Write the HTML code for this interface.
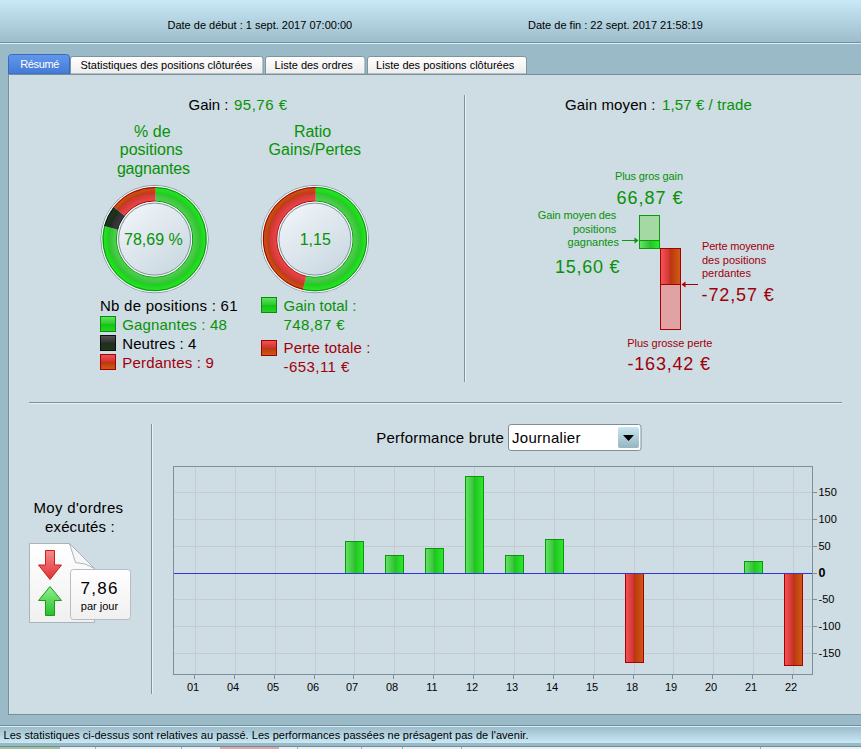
<!DOCTYPE html>
<html><head><meta charset="utf-8">
<style>
html,body{margin:0;padding:0;width:861px;height:749px;overflow:hidden;background:#9bbac8;}
svg{position:absolute;left:0;top:0;}
text{font-family:"Liberation Sans",sans-serif;white-space:pre;}
</style></head>
<body>
<svg xml:space="preserve" width="861" height="749" viewBox="0 0 861 749">
<defs>
  <linearGradient id="hdr" x1="0" y1="0" x2="0" y2="1">
    <stop offset="0" stop-color="#c9e9f6"/><stop offset="1" stop-color="#9ebdcb"/>
  </linearGradient>
  <linearGradient id="stat" x1="0" y1="0" x2="0" y2="1">
    <stop offset="0" stop-color="#9dbccb"/><stop offset="1" stop-color="#c9e9f6"/>
  </linearGradient>
  <linearGradient id="tabsel" x1="0" y1="0" x2="0" y2="1">
    <stop offset="0" stop-color="#6298ea"/><stop offset="1" stop-color="#4479d6"/>
  </linearGradient>
  <linearGradient id="tab" x1="0" y1="0" x2="0" y2="1">
    <stop offset="0" stop-color="#ffffff"/><stop offset="1" stop-color="#ececec"/>
  </linearGradient>
  <linearGradient id="barG" x1="0" y1="0" x2="1" y2="0">
    <stop offset="0" stop-color="#60e860"/><stop offset="0.5" stop-color="#36bf36"/>
    <stop offset="0.5" stop-color="#1ec41e"/><stop offset="1" stop-color="#30ea30"/>
  </linearGradient>
  <linearGradient id="barR" x1="0" y1="0" x2="1" y2="0">
    <stop offset="0" stop-color="#f25656"/><stop offset="0.5" stop-color="#cf2e2e"/>
    <stop offset="0.5" stop-color="#b8380e"/><stop offset="1" stop-color="#d25a16"/>
  </linearGradient>
  <linearGradient id="legG" x1="0" y1="0" x2="0" y2="1">
    <stop offset="0" stop-color="#5ee85e"/><stop offset="0.5" stop-color="#2cc82c"/>
    <stop offset="0.5" stop-color="#18c018"/><stop offset="1" stop-color="#20d820"/>
  </linearGradient>
  <linearGradient id="legK" x1="0" y1="0" x2="0" y2="1">
    <stop offset="0" stop-color="#555"/><stop offset="0.5" stop-color="#2e2e2e"/>
    <stop offset="0.5" stop-color="#1e2e1e"/><stop offset="1" stop-color="#1a3a1a"/>
  </linearGradient>
  <linearGradient id="legR" x1="0" y1="0" x2="0" y2="1">
    <stop offset="0" stop-color="#f25656"/><stop offset="0.5" stop-color="#d03030"/>
    <stop offset="0.5" stop-color="#b8380e"/><stop offset="1" stop-color="#d25a16"/>
  </linearGradient>
  <linearGradient id="inner" x1="0" y1="0" x2="1" y2="1">
    <stop offset="0" stop-color="#eef3f6"/><stop offset="1" stop-color="#cbd9e1"/>
  </linearGradient>
  <linearGradient id="combo" x1="0" y1="0" x2="0" y2="1">
    <stop offset="0" stop-color="#c8e6f2"/><stop offset="1" stop-color="#97b4c1"/>
  </linearGradient>
  <linearGradient id="doc" x1="0" y1="0" x2="0" y2="1">
    <stop offset="0" stop-color="#ffffff"/><stop offset="1" stop-color="#f0f0f0"/>
  </linearGradient>
</defs>

<!-- header -->
<rect x="0" y="0" width="861" height="42" fill="url(#hdr)"/>
<rect x="0" y="42" width="861" height="1" fill="#718e9a"/>
<rect x="0" y="43" width="861" height="1" fill="#d9eef7"/>
<text x="167.5" y="29" font-size="11" fill="#000">Date de début : 1 sept. 2017 07:00:00</text>
<text x="528" y="29" font-size="11" fill="#000">Date de fin : 22 sept. 2017 21:58:19</text>

<!-- tabs -->
<path d="M8.5 74 V57.5 Q8.5 54.5 11.5 54.5 H66.5 Q69.5 54.5 69.5 57.5 V74 Z" fill="url(#tabsel)" stroke="#3a69c0" stroke-width="1"/>
<text x="20.3" y="68.3" font-size="11" fill="#fff" textLength="39" lengthAdjust="spacing">Résumé</text>
<path d="M70.5 74 V59 Q70.5 56.5 73 56.5 H260.5 Q263 56.5 263 59 V74 Z" fill="url(#tab)" stroke="#7f939c" stroke-width="1"/>
<text x="80.4" y="68.8" font-size="11" fill="#000">Statistiques des positions clôturées</text>
<path d="M265.5 74 V59 Q265.5 56.5 268 56.5 H362.5 Q365 56.5 365 59 V74 Z" fill="url(#tab)" stroke="#7f939c" stroke-width="1"/>
<text x="274.6" y="68.8" font-size="11" fill="#000">Liste des ordres</text>
<path d="M367.5 74 V59 Q367.5 56.5 370 56.5 H524 Q526.5 56.5 526.5 59 V74 Z" fill="url(#tab)" stroke="#7f939c" stroke-width="1"/>
<text x="376.1" y="68.8" font-size="11" fill="#000">Liste des positions clôturées</text>

<!-- main panel -->
<rect x="8" y="74" width="853" height="641" fill="#cedce3"/>
<rect x="8" y="74" width="853" height="1" fill="#76909b"/>
<rect x="70" y="74" width="0" height="1" fill="#76909b"/>
<rect x="8" y="74" width="1" height="641" fill="#76909b"/>
<rect x="9" y="75" width="1" height="639" fill="#d6e4ea"/>
<rect x="8" y="714" width="853" height="1" fill="#76909b"/>

<!-- status bar -->
<rect x="0" y="725" width="861" height="1" fill="#6f8c98"/>
<rect x="0" y="726" width="861" height="1" fill="#d9eef7"/>
<rect x="0" y="727" width="861" height="16" fill="url(#stat)"/>
<rect x="0" y="743" width="861" height="3" fill="#9bb8c5"/>
<rect x="0" y="746" width="861" height="1" fill="#6f8c98"/>
<rect x="0" y="747" width="861" height="2" fill="#e9eff4"/>
<rect x="0" y="747" width="60" height="2" fill="#9cc49c"/>
<rect x="220" y="747" width="59" height="2" fill="#e0a8a8"/>
<g fill="#a3adb4"><rect x="95" y="747" width="1" height="2"/><rect x="181" y="747" width="1" height="2"/><rect x="297" y="747" width="1" height="2"/><rect x="361" y="747" width="1" height="2"/><rect x="402" y="747" width="1" height="2"/><rect x="461" y="747" width="1" height="2"/><rect x="760" y="747" width="1" height="2"/></g>
<text x="3.5" y="739" font-size="11" fill="#000" textLength="525" lengthAdjust="spacing">Les statistiques ci-dessus sont relatives au passé. Les performances passées ne présagent pas de l'avenir.</text>

<!-- separators -->
<rect x="464" y="95" width="1" height="287" fill="#7a939e"/>
<rect x="465" y="95" width="1" height="287" fill="#e2f2fa"/>
<rect x="29" y="402" width="813" height="1" fill="#7a939e"/>
<rect x="29" y="403" width="813" height="1" fill="#e2f2fa"/>
<rect x="151" y="424" width="1" height="270" fill="#7a939e"/>
<rect x="152" y="424" width="1" height="270" fill="#e2f2fa"/>


<!-- ===== Donuts ===== -->
<defs>
  <radialGradient id="rgG1" gradientUnits="userSpaceOnUse" cx="154.6" cy="239.1" r="52.1">
    <stop offset="0.73" stop-color="#4ed24e"/><stop offset="0.87" stop-color="#36c136"/>
    <stop offset="0.87" stop-color="#1ccf1c"/><stop offset="1" stop-color="#2ae62a"/>
  </radialGradient>
  <radialGradient id="rgK1" gradientUnits="userSpaceOnUse" cx="154.6" cy="239.1" r="52.1">
    <stop offset="0.73" stop-color="#3c3c3c"/><stop offset="0.87" stop-color="#2c2c2c"/>
    <stop offset="0.87" stop-color="#1c2c1c"/><stop offset="1" stop-color="#1e381e"/>
  </radialGradient>
  <radialGradient id="rgR1" gradientUnits="userSpaceOnUse" cx="154.6" cy="239.1" r="52.1">
    <stop offset="0.73" stop-color="#e84848"/><stop offset="0.88" stop-color="#d03434"/>
    <stop offset="0.88" stop-color="#bc3c10"/><stop offset="1" stop-color="#cc5818"/>
  </radialGradient>
  <radialGradient id="rgG2" gradientUnits="userSpaceOnUse" cx="314.9" cy="239.1" r="52.1">
    <stop offset="0.73" stop-color="#4ed24e"/><stop offset="0.87" stop-color="#36c136"/>
    <stop offset="0.87" stop-color="#1ccf1c"/><stop offset="1" stop-color="#2ae62a"/>
  </radialGradient>
  <radialGradient id="rgR2" gradientUnits="userSpaceOnUse" cx="314.9" cy="239.1" r="52.1">
    <stop offset="0.73" stop-color="#e84848"/><stop offset="0.88" stop-color="#d03434"/>
    <stop offset="0.88" stop-color="#bc3c10"/><stop offset="1" stop-color="#cc5818"/>
  </radialGradient>
  <linearGradient id="innerC" x1="0.2" y1="0.1" x2="0.8" y2="0.9">
    <stop offset="0" stop-color="#edf2f6"/><stop offset="1" stop-color="#ccdae2"/>
  </linearGradient>
</defs>

<g id="donut1">
<circle cx="154.6" cy="239.1" r="53.70" fill="none" stroke="#84959e" stroke-width="1"/>
<circle cx="154.6" cy="239.1" r="52.60" fill="none" stroke="#f6f9fb" stroke-width="1.1"/>
<path d="M155.69 187.01 A52.10 52.10 0 1 1 104.15 226.07 L118.29 229.72 A37.50 37.50 0 1 0 155.39 201.61 Z" fill="url(#rgG1)"/>
<path d="M104.15 226.07 A52.10 52.10 0 0 1 113.59 206.96 L125.08 215.97 A37.50 37.50 0 0 0 118.29 229.72 Z" fill="url(#rgK1)"/>
<path d="M113.59 206.96 A52.10 52.10 0 0 1 155.69 187.01 L155.39 201.61 A37.50 37.50 0 0 0 125.08 215.97 Z" fill="url(#rgR1)"/>
<path d="M155.68 187.51 A51.60 51.60 0 1 1 104.64 226.20 M155.40 201.11 A38.00 38.00 0 1 1 117.81 229.60" fill="none" stroke="#0a960a" stroke-width="1"/>
<path d="M104.64 226.20 A51.60 51.60 0 0 1 113.99 207.27 M117.81 229.60 A38.00 38.00 0 0 1 124.69 215.66" fill="none" stroke="#0a140a" stroke-width="1"/>
<path d="M113.99 207.27 A51.60 51.60 0 0 1 155.68 187.51 M124.69 215.66 A38.00 38.00 0 0 1 155.40 201.11" fill="none" stroke="#a80000" stroke-width="1"/>
<circle cx="154.6" cy="239.1" r="37.00" fill="none" stroke="#f6f9fb" stroke-width="1.1"/>
<circle cx="154.6" cy="239.1" r="36.00" fill="url(#innerC)" stroke="#84959e" stroke-width="1"/>
</g>
<g id="donut2">
<circle cx="314.9" cy="239.1" r="53.70" fill="none" stroke="#84959e" stroke-width="1"/>
<circle cx="314.9" cy="239.1" r="52.60" fill="none" stroke="#f6f9fb" stroke-width="1.1"/>
<path d="M315.81 187.01 A52.10 52.10 0 1 1 302.92 289.80 L306.28 275.60 A37.50 37.50 0 1 0 315.55 201.61 Z" fill="url(#rgG2)"/>
<path d="M302.92 289.80 A52.10 52.10 0 0 1 315.81 187.01 L315.55 201.61 A37.50 37.50 0 0 0 306.28 275.60 Z" fill="url(#rgR2)"/>
<path d="M315.80 187.51 A51.60 51.60 0 1 1 303.03 289.32 M315.56 201.11 A38.00 38.00 0 1 1 306.16 276.08" fill="none" stroke="#0a960a" stroke-width="1"/>
<path d="M303.03 289.32 A51.60 51.60 0 0 1 315.80 187.51 M306.16 276.08 A38.00 38.00 0 0 1 315.56 201.11" fill="none" stroke="#a80000" stroke-width="1"/>
<circle cx="314.9" cy="239.1" r="37.00" fill="none" stroke="#f6f9fb" stroke-width="1.1"/>
<circle cx="314.9" cy="239.1" r="36.00" fill="url(#innerC)" stroke="#84959e" stroke-width="1"/>
</g>

<!-- ===== Left texts ===== -->
<g font-size="15" fill="#000">
  <text x="188.5" y="110" textLength="40" lengthAdjust="spacing">Gain :</text>
  <text x="234" y="110" fill="#079207" textLength="53" lengthAdjust="spacing">95,76 €</text>
</g>
<g font-size="16" fill="#079207" text-anchor="middle">
  <text x="152.3" y="136.6">% de</text>
  <text x="151.3" y="155.3" textLength="63" lengthAdjust="spacing">positions</text>
  <text x="153.4" y="173.9" textLength="73" lengthAdjust="spacing">gagnantes</text>
  <text x="312.6" y="136.6">Ratio</text>
  <text x="314.8" y="155.3">Gains/Pertes</text>
  <text x="153.4" y="244.9">78,69 %</text>
  <text x="315.3" y="244.9">1,15</text>
</g>
<g font-size="15">
  <text x="100" y="311" fill="#000" textLength="137.5" lengthAdjust="spacing">Nb de positions : 61</text>
  <text x="122.3" y="329.8" fill="#079207" textLength="104.5" lengthAdjust="spacing">Gagnantes : 48</text>
  <text x="122.3" y="348.8" fill="#000" textLength="74" lengthAdjust="spacing">Neutres : 4</text>
  <text x="122.3" y="367.6" fill="#a0000a" textLength="91.5" lengthAdjust="spacing">Perdantes : 9</text>
  <text x="283.5" y="310.5" fill="#079207" textLength="72.8" lengthAdjust="spacing">Gain total :</text>
  <text x="283.5" y="329.7" fill="#079207" textLength="61" lengthAdjust="spacing">748,87 €</text>
  <text x="283.5" y="353.2" fill="#a0000a" textLength="87" lengthAdjust="spacing">Perte totale :</text>
  <text x="283.5" y="372.4" fill="#a0000a" textLength="65.8" lengthAdjust="spacing">-653,11 €</text>
</g>
<rect x="100.5" y="316.5" width="15" height="15" fill="url(#legG)" stroke="#0c8a0c"/>
<rect x="100.5" y="335.5" width="15" height="15" fill="url(#legK)" stroke="#0e0e0e"/>
<rect x="100.5" y="354.5" width="15" height="15" fill="url(#legR)" stroke="#a00000"/>
<rect x="261.5" y="297.5" width="15" height="15" fill="url(#legG)" stroke="#0c8a0c"/>
<rect x="261.5" y="340.5" width="15" height="15" fill="url(#legR)" stroke="#a00000"/>

<!-- ===== Right stats ===== -->
<g font-size="15">
  <text x="565" y="110" fill="#000" textLength="90.5" lengthAdjust="spacing">Gain moyen :</text>
  <text x="662" y="110" fill="#079207" textLength="89.8" lengthAdjust="spacing">1,57 € / trade</text>
</g>
<g font-size="11">
  <text x="615" y="180.2" fill="#079207" textLength="68" lengthAdjust="spacing">Plus gros gain</text>
  <text x="616.3" y="218.7" fill="#079207" text-anchor="end" textLength="78.5" lengthAdjust="spacing">Gain moyen des</text>
  <text x="616.3" y="232.5" fill="#079207" text-anchor="end">positions</text>
  <text x="619" y="246" fill="#079207" text-anchor="end">gagnantes</text>
  <text x="702" y="250" fill="#a0000a" textLength="72.5" lengthAdjust="spacing">Perte moyenne</text>
  <text x="702" y="263.6" fill="#a0000a">des positions</text>
  <text x="702" y="277.3" fill="#a0000a">perdantes</text>
  <text x="627.3" y="346.6" fill="#a0000a" textLength="85" lengthAdjust="spacing">Plus grosse perte</text>
</g>
<g font-size="18">
  <text x="616.5" y="203.5" fill="#079207" textLength="66" lengthAdjust="spacing">66,87 €</text>
  <text x="555" y="272.6" fill="#079207" textLength="64.5" lengthAdjust="spacing">15,60 €</text>
  <text x="701.5" y="301.4" fill="#a0000a" textLength="72.3" lengthAdjust="spacing">-72,57 €</text>
  <text x="627.5" y="370" fill="#a0000a" textLength="82.5" lengthAdjust="spacing">-163,42 €</text>
</g>
<linearGradient id="gbar2" x1="0" y1="0" x2="1" y2="0">
  <stop offset="0" stop-color="#5ae45a"/><stop offset="0.5" stop-color="#38c238"/>
  <stop offset="0.5" stop-color="#1cc81c"/><stop offset="1" stop-color="#2ce62c"/>
</linearGradient>
<rect x="639.5" y="215.5" width="20" height="33" fill="#a4d9a4" stroke="#0c9a0c"/>
<rect x="640" y="240.5" width="19" height="7.5" fill="url(#barG)"/>
<line x1="639.5" y1="240.5" x2="659.5" y2="240.5" stroke="#0c9a0c"/>
<rect x="660.5" y="248.5" width="20" height="81" fill="#e0a2a2" stroke="#a80000"/>
<rect x="661" y="249" width="19" height="35.5" fill="url(#barR)"/>
<line x1="660.5" y1="284.5" x2="680.5" y2="284.5" stroke="#a80000"/>
<line x1="622" y1="240.5" x2="636" y2="240.5" stroke="#0c9a0c"/>
<path d="M638.5 240.5 L634.5 237.5 L634.5 243.5 Z" fill="#079207"/>
<line x1="684" y1="284.5" x2="698" y2="284.5" stroke="#a80000"/>
<path d="M681.5 284.5 L685.5 281.5 L685.5 287.5 Z" fill="#a80000"/>

<!-- ===== Bottom left widget ===== -->
<g font-size="15" fill="#000" text-anchor="middle">
  <text x="78.3" y="512.8" textLength="89.5" lengthAdjust="spacing">Moy d'ordres</text>
  <text x="79.8" y="531.5" textLength="69.5" lengthAdjust="spacing">exécutés :</text>
</g>

<!-- CHART_START -->
<line x1="195.5" y1="467" x2="195.5" y2="674" stroke="#c5cbce"/>
<line x1="235.5" y1="467" x2="235.5" y2="674" stroke="#c5cbce"/>
<line x1="275.5" y1="467" x2="275.5" y2="674" stroke="#c5cbce"/>
<line x1="315.5" y1="467" x2="315.5" y2="674" stroke="#c5cbce"/>
<line x1="354.5" y1="467" x2="354.5" y2="674" stroke="#c5cbce"/>
<line x1="394.5" y1="467" x2="394.5" y2="674" stroke="#c5cbce"/>
<line x1="434.5" y1="467" x2="434.5" y2="674" stroke="#c5cbce"/>
<line x1="474.5" y1="467" x2="474.5" y2="674" stroke="#c5cbce"/>
<line x1="514.5" y1="467" x2="514.5" y2="674" stroke="#c5cbce"/>
<line x1="554.5" y1="467" x2="554.5" y2="674" stroke="#c5cbce"/>
<line x1="594.5" y1="467" x2="594.5" y2="674" stroke="#c5cbce"/>
<line x1="634.5" y1="467" x2="634.5" y2="674" stroke="#c5cbce"/>
<line x1="673.5" y1="467" x2="673.5" y2="674" stroke="#c5cbce"/>
<line x1="713.5" y1="467" x2="713.5" y2="674" stroke="#c5cbce"/>
<line x1="753.5" y1="467" x2="753.5" y2="674" stroke="#c5cbce"/>
<line x1="793.5" y1="467" x2="793.5" y2="674" stroke="#c5cbce"/>
<line x1="174" y1="492.5" x2="812" y2="492.5" stroke="#c5cbce"/>
<line x1="174" y1="519.5" x2="812" y2="519.5" stroke="#c5cbce"/>
<line x1="174" y1="546.5" x2="812" y2="546.5" stroke="#c5cbce"/>
<line x1="174" y1="599.5" x2="812" y2="599.5" stroke="#c5cbce"/>
<line x1="174" y1="626.5" x2="812" y2="626.5" stroke="#c5cbce"/>
<line x1="174" y1="653.5" x2="812" y2="653.5" stroke="#c5cbce"/>
<rect x="345.5" y="541.5" width="18" height="32" fill="url(#barG)" stroke="#0a960a"/>
<rect x="385.5" y="555.5" width="18" height="18" fill="url(#barG)" stroke="#0a960a"/>
<rect x="425.5" y="548.5" width="18" height="25" fill="url(#barG)" stroke="#0a960a"/>
<rect x="465.5" y="476.5" width="18" height="97" fill="url(#barG)" stroke="#0a960a"/>
<rect x="505.5" y="555.5" width="18" height="18" fill="url(#barG)" stroke="#0a960a"/>
<rect x="545.5" y="539.5" width="18" height="34" fill="url(#barG)" stroke="#0a960a"/>
<rect x="625.5" y="573.5" width="18" height="89" fill="url(#barR)" stroke="#a80000"/>
<rect x="744.5" y="561.5" width="18" height="12" fill="url(#barG)" stroke="#0a960a"/>
<rect x="784.5" y="573.5" width="18" height="92" fill="url(#barR)" stroke="#a80000"/>
<line x1="174" y1="573.5" x2="812" y2="573.5" stroke="#3434dd"/>
<rect x="173.5" y="466.5" width="639" height="208" fill="none" stroke="#7d9099"/>
<line x1="194.5" y1="675" x2="194.5" y2="679" stroke="#7d9099"/>
<text x="193.0" y="691" font-size="11" fill="#000" text-anchor="middle">01</text>
<line x1="234.5" y1="675" x2="234.5" y2="679" stroke="#7d9099"/>
<text x="233.0" y="691" font-size="11" fill="#000" text-anchor="middle">04</text>
<line x1="274.5" y1="675" x2="274.5" y2="679" stroke="#7d9099"/>
<text x="273.0" y="691" font-size="11" fill="#000" text-anchor="middle">05</text>
<line x1="314.5" y1="675" x2="314.5" y2="679" stroke="#7d9099"/>
<text x="313.0" y="691" font-size="11" fill="#000" text-anchor="middle">06</text>
<line x1="353.5" y1="675" x2="353.5" y2="679" stroke="#7d9099"/>
<text x="352.0" y="691" font-size="11" fill="#000" text-anchor="middle">07</text>
<line x1="393.5" y1="675" x2="393.5" y2="679" stroke="#7d9099"/>
<text x="392.0" y="691" font-size="11" fill="#000" text-anchor="middle">08</text>
<line x1="433.5" y1="675" x2="433.5" y2="679" stroke="#7d9099"/>
<text x="432.0" y="691" font-size="11" fill="#000" text-anchor="middle">11</text>
<line x1="473.5" y1="675" x2="473.5" y2="679" stroke="#7d9099"/>
<text x="472.0" y="691" font-size="11" fill="#000" text-anchor="middle">12</text>
<line x1="513.5" y1="675" x2="513.5" y2="679" stroke="#7d9099"/>
<text x="512.0" y="691" font-size="11" fill="#000" text-anchor="middle">13</text>
<line x1="553.5" y1="675" x2="553.5" y2="679" stroke="#7d9099"/>
<text x="552.0" y="691" font-size="11" fill="#000" text-anchor="middle">14</text>
<line x1="593.5" y1="675" x2="593.5" y2="679" stroke="#7d9099"/>
<text x="592.0" y="691" font-size="11" fill="#000" text-anchor="middle">15</text>
<line x1="633.5" y1="675" x2="633.5" y2="679" stroke="#7d9099"/>
<text x="632.0" y="691" font-size="11" fill="#000" text-anchor="middle">18</text>
<line x1="672.5" y1="675" x2="672.5" y2="679" stroke="#7d9099"/>
<text x="671.0" y="691" font-size="11" fill="#000" text-anchor="middle">19</text>
<line x1="712.5" y1="675" x2="712.5" y2="679" stroke="#7d9099"/>
<text x="711.0" y="691" font-size="11" fill="#000" text-anchor="middle">20</text>
<line x1="752.5" y1="675" x2="752.5" y2="679" stroke="#7d9099"/>
<text x="751.0" y="691" font-size="11" fill="#000" text-anchor="middle">21</text>
<line x1="792.5" y1="675" x2="792.5" y2="679" stroke="#7d9099"/>
<text x="791.0" y="691" font-size="11" fill="#000" text-anchor="middle">22</text>
<line x1="813" y1="492.5" x2="817" y2="492.5" stroke="#7d9099"/>
<text x="818.5" y="495.5" font-size="11" fill="#000">150</text>
<line x1="813" y1="519.5" x2="817" y2="519.5" stroke="#7d9099"/>
<text x="818.5" y="522.5" font-size="11" fill="#000">100</text>
<line x1="813" y1="546.5" x2="817" y2="546.5" stroke="#7d9099"/>
<text x="818.5" y="549.5" font-size="11" fill="#000">50</text>
<line x1="813" y1="573.5" x2="817" y2="573.5" stroke="#7d9099"/>
<text x="818.5" y="577" font-size="12.5" font-weight="bold" fill="#000">0</text>
<line x1="813" y1="599.5" x2="817" y2="599.5" stroke="#7d9099"/>
<text x="818.5" y="602.5" font-size="11" fill="#000">-50</text>
<line x1="813" y1="626.5" x2="817" y2="626.5" stroke="#7d9099"/>
<text x="818.5" y="629.5" font-size="11" fill="#000">-100</text>
<line x1="813" y1="653.5" x2="817" y2="653.5" stroke="#7d9099"/>
<text x="818.5" y="656.5" font-size="11" fill="#000">-150</text>
<!-- CHART_END -->
<text x="376.3" y="442.6" font-size="15" fill="#000" textLength="127.5" lengthAdjust="spacing">Performance brute</text>
<rect x="508.5" y="424.5" width="132.5" height="26" rx="2.5" fill="#fff" stroke="#7f8f96"/>
<text x="512" y="442.9" font-size="15" fill="#000" textLength="68.5" lengthAdjust="spacing">Journalier</text>
<rect x="618" y="427" width="21" height="21" rx="2" fill="url(#combo)"/>
<path d="M623 435 H634 L628.5 441 Z" fill="#000"/>

<linearGradient id="arrR" x1="0" y1="0" x2="0" y2="1"><stop offset="0" stop-color="#f48c8c"/><stop offset="1" stop-color="#e03232"/></linearGradient>
<linearGradient id="arrG" x1="0" y1="0" x2="0" y2="1"><stop offset="0" stop-color="#8ef08e"/><stop offset="1" stop-color="#28c028"/></linearGradient>
<path d="M29.5 543.5 H69.5 L94.5 568.5 V622.5 H29.5 Z" fill="url(#doc)" stroke="#a9b4ba"/>
<path d="M69.5 543.5 L75.5 562.5 Q86 562.8 94.5 568.5 Z" fill="#f7f7f7" stroke="#a9b4ba"/>
<path d="M45.5 550.5 H54.5 V565 H61.5 L50 579.5 L38.5 565 H45.5 Z" fill="url(#arrR)" stroke="#c81e1e"/>
<path d="M50 586.5 L61.5 600.5 H54.5 V615.5 H45.5 V600.5 H38.5 Z" fill="url(#arrG)" stroke="#1a9a1a"/>
<rect x="70.5" y="569.5" width="60" height="50" rx="3" fill="url(#doc)" stroke="#b4bec4"/>
<text x="80.5" y="593.8" font-size="17" fill="#000" textLength="37" lengthAdjust="spacing">7,86</text>
<text x="80.8" y="609.7" font-size="11" fill="#000">par jour</text>

</svg>
</body></html>
